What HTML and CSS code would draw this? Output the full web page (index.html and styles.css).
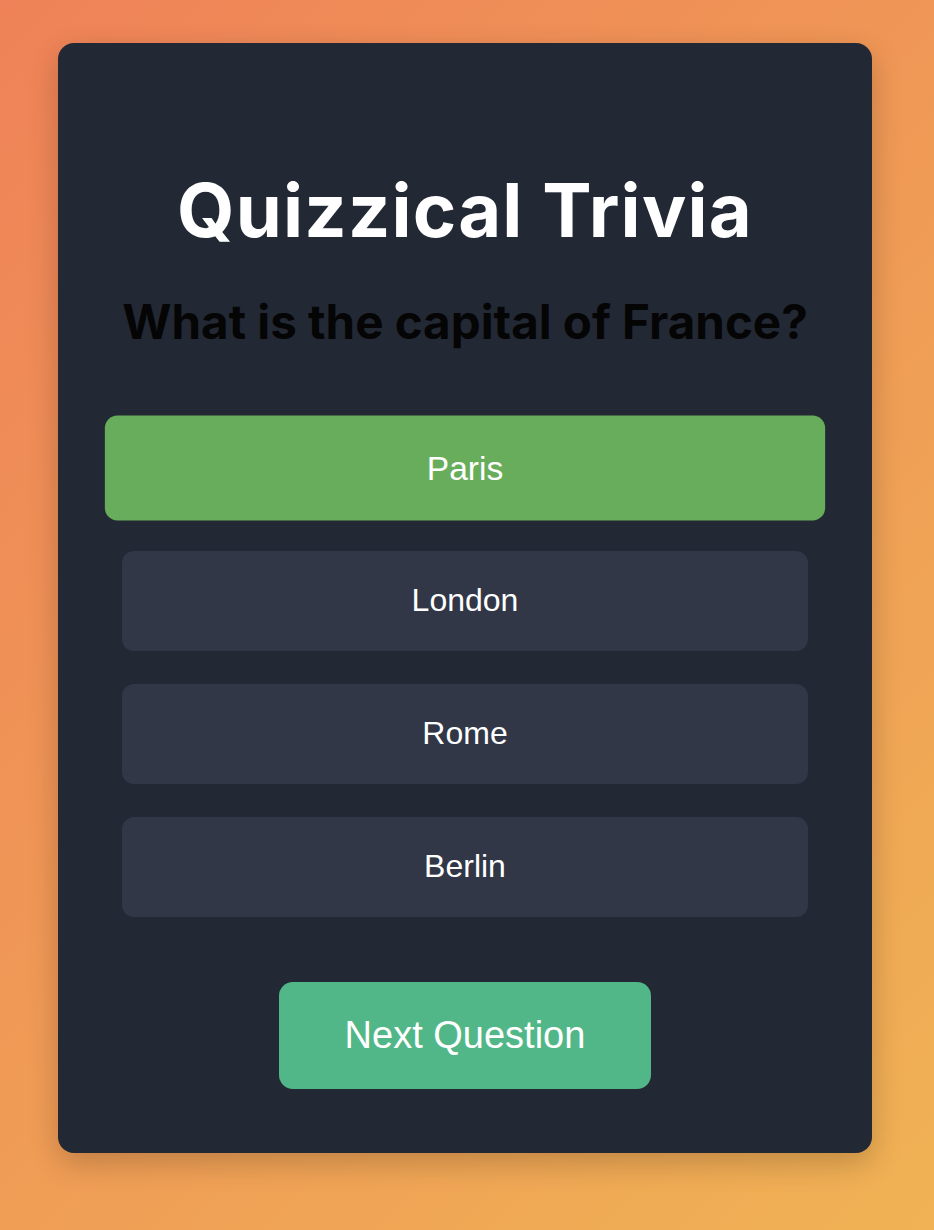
FILE: index.html
```html
<!DOCTYPE html>
<html lang="en">
<head>
<meta charset="utf-8">
<title>Quizzical Trivia</title>
<link rel="stylesheet" href="styles.css">
</head>
<body>
  <main class="card">
    <h1 class="title">Quizzical Trivia</h1>
    <h2 class="question">What is the capital of France?</h2>
    <div class="options">
      <button class="option option--correct">Paris</button>
      <button class="option">London</button>
      <button class="option">Rome</button>
      <button class="option">Berlin</button>
    </div>
    <div class="actions">
      <button class="next">Next Question</button>
    </div>
  </main>
</body>
</html>
```

FILE: styles.css
```css
* { box-sizing: border-box; }

html, body {
  margin: 0;
  padding: 0;
}

body {
  min-height: 1230px;
  background: linear-gradient(135deg, #ef8258 0%, #f0b254 100%);
  display: flex;
  justify-content: center;
  align-items: flex-start;
  padding-top: 43px;
  font-family: "Liberation Sans", Arial, sans-serif;
}

.card {
  width: 814px;
  margin-right: 4px;
  background: #222834;
  border-radius: 16px;
  box-shadow: 0 10px 30px rgba(0, 0, 0, 0.2);
  padding: 123px 64px 64px;
  display: flex;
  flex-direction: column;
  align-items: center;
}

.title {
  margin: 0;
  font-family: Inter, "Noto Sans", sans-serif;
  font-weight: 700;
  font-size: 74px;
  line-height: 1.2;
  letter-spacing: 1.2px;
  color: #ffffff;
  text-align: center;
}

.question {
  margin: 38px 0 0;
  font-family: Inter, "Noto Sans", sans-serif;
  font-weight: 700;
  font-size: 47.5px;
  line-height: 1.2;
  color: #050505;
  text-align: center;
  white-space: nowrap;
}

.options {
  width: 100%;
  margin-top: 68px;
  display: flex;
  flex-direction: column;
  gap: 33px;
}

.option {
  display: block;
  width: 100%;
  height: 100px;
  border: none;
  border-radius: 12px;
  background: #313747;
  color: #ffffff;
  font-family: "Liberation Sans", Arial, sans-serif;
  font-size: 32px;
  cursor: pointer;
}

.option--correct {
  background: #68ad5b;
  transform: scale(1.05);
}

.actions {
  margin-top: 65px;
  display: flex;
  justify-content: center;
}

.next {
  width: 372px;
  height: 107px;
  border: none;
  border-radius: 14px;
  background: #52b788;
  color: #ffffff;
  font-family: "Liberation Sans", Arial, sans-serif;
  font-size: 38px;
  cursor: pointer;
}
```
